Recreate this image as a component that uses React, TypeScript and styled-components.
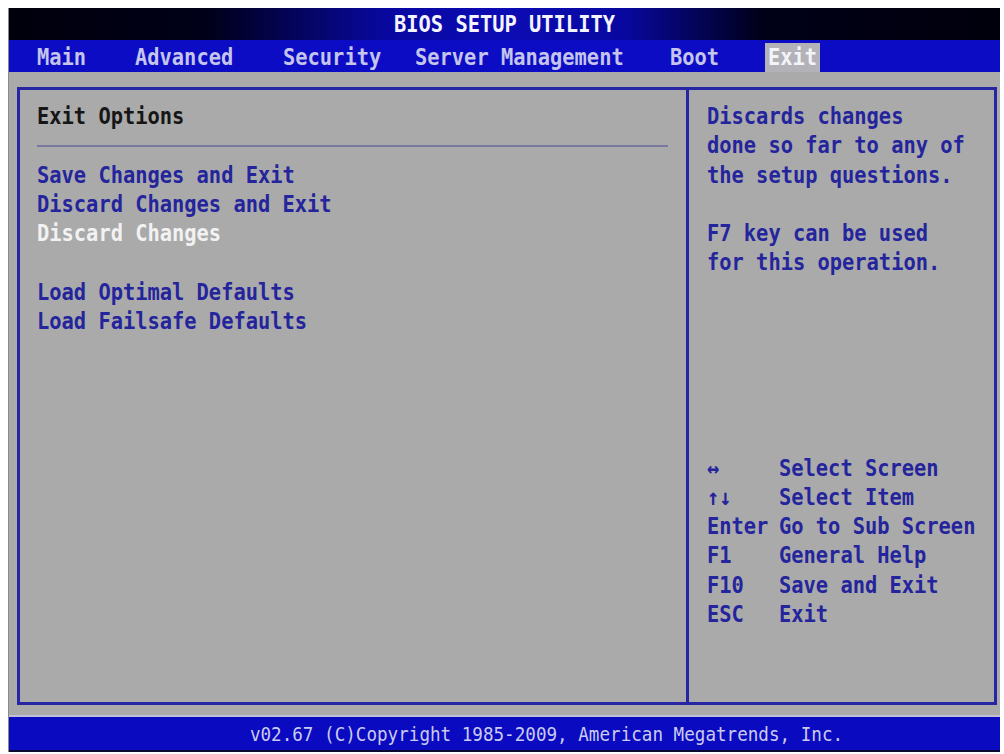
import React from "react";
import styled, { createGlobalStyle } from "styled-components";

const GlobalStyle = createGlobalStyle`
    html, body {
        margin: 0;
        padding: 0;
        background: #ffffff;
    }
`;

const LINE = 29.3;
const FONT = `"DejaVu Sans Mono", "Liberation Mono", monospace`;

const Screen = styled.div`
    margin: 8px 0 0 8px;
    width: 992px;
    height: 744px;
    display: flex;
    flex-direction: column;
    background: #aaaaaa;
    font-family: ${FONT};
    font-weight: bold;
    font-size: 20.4px;
    border-left: 1px solid #8a8a8a;
    box-sizing: border-box;
`;

const TitleBar = styled.div`
    height: 32px;
    flex-shrink: 0;
    display: flex;
    align-items: center;
    justify-content: center;
    color: #f4f4ff;
    background: linear-gradient(
        90deg,
        #00000c 0%,
        #000018 20%,
        #0808a0 38%,
        #0c0cb4 50%,
        #0808a0 62%,
        #000018 76%,
        #00000c 100%
    );
    span {
        display: inline-block;
        transform: scaleY(1.12);
    }
`;

const MenuBar = styled.div`
    height: 32px;
    flex-shrink: 0;
    display: flex;
    align-items: flex-end;
    background: #0c0cc4;
    padding-left: 28px;
`;

const MenuItem = styled.div<{ $w?: number; $active?: boolean }>`
    width: ${(p) => (p.$w ? `${p.$w}px` : "auto")};
    height: 29px;
    line-height: 29px;
    flex-shrink: 0;
    color: #c4c4ec;
    white-space: pre;
    span {
        display: inline-block;
        transform: scaleY(1.12);
    }
    ${(p) =>
        p.$active &&
        `
        background: #b2b2b8;
        color: #f4f4f8;
        padding: 0 3px;
        margin-left: -3px;
    `}
`;

const Body = styled.div`
    flex: 1;
    padding: 15px 3px 12px 8px;
    display: flex;
    flex-direction: column;
    box-shadow: inset 0 -2px 0 #c0c0d8;
`;

const Frame = styled.div`
    flex: 1;
    display: grid;
    grid-template-columns: 666px 1fr;
    border: 3px solid #2626a4;
`;

const Panel = styled.div<{ $divider?: boolean }>`
    display: flex;
    flex-direction: column;
    padding: 12px 0 0 ${(p) => (p.$divider ? 18 : 17)}px;
    ${(p) => p.$divider && `border-left: 3px solid #2626a4;`}
`;

const Line = styled.div<{ $tone?: "dark" | "blue" | "white" }>`
    height: ${LINE}px;
    line-height: ${LINE}px;
    white-space: pre;
    transform: scaleY(1.12);
    color: ${(p) =>
        p.$tone === "dark" ? "#161616" : p.$tone === "white" ? "#f2f2f2" : "#24249c"};
`;

const Separator = styled.div`
    height: ${LINE}px;
    display: flex;
    align-items: center;
    margin-right: 18px;
    &::after {
        content: "";
        flex: 1;
        height: 2px;
        background: #7878a0;
    }
`;

const HelpBlock = styled.div`
    margin-top: ${LINE * 6}px;
`;

const HelpRow = styled.div`
    display: flex;
    height: ${LINE}px;
    line-height: ${LINE}px;
    color: #24249c;
    white-space: pre;
    transform: scaleY(1.12);
`;

const HelpKey = styled.span`
    width: 72px;
    flex-shrink: 0;
`;

const Footer = styled.div`
    height: 35px;
    flex-shrink: 0;
    display: flex;
    align-items: center;
    justify-content: center;
    background: #0a0ac0;
    border-bottom: 2px solid #0a0a30;
    color: #cacaf0;
    font-weight: normal;
    font-size: 17.6px;
    box-sizing: border-box;
    padding-left: 84px;
    span {
        display: inline-block;
        transform: scaleY(1.15);
    }
`;

const menu = [
    { label: "Main", w: 98 },
    { label: "Advanced", w: 148 },
    { label: "Security", w: 132 },
    { label: "Server Management", w: 255 },
    { label: "Boot", w: 98 },
    { label: "Exit", active: true },
];

const help = [
    ["\u2194", "Select Screen"],
    ["\u2191\u2193", "Select Item"],
    ["Enter", "Go to Sub Screen"],
    ["F1", "General Help"],
    ["F10", "Save and Exit"],
    ["ESC", "Exit"],
];

export default function App() {
    return (
        <>
            <GlobalStyle />
            <Screen>
                <TitleBar>
                    <span>BIOS SETUP UTILITY</span>
                </TitleBar>
                <MenuBar>
                    {menu.map((m) => (
                        <MenuItem key={m.label} $w={m.w} $active={m.active}>
                            <span>{m.label}</span>
                        </MenuItem>
                    ))}
                </MenuBar>
                <Body>
                    <Frame>
                        <Panel>
                            <Line $tone="dark">Exit Options</Line>
                            <Separator />
                            <Line>Save Changes and Exit</Line>
                            <Line>Discard Changes and Exit</Line>
                            <Line $tone="white">Discard Changes</Line>
                            <Line />
                            <Line>Load Optimal Defaults</Line>
                            <Line>Load Failsafe Defaults</Line>
                        </Panel>
                        <Panel $divider>
                            <Line>Discards changes</Line>
                            <Line>done so far to any of</Line>
                            <Line>the setup questions.</Line>
                            <Line />
                            <Line>F7 key can be used</Line>
                            <Line>for this operation.</Line>
                            <HelpBlock>
                                {help.map(([k, d]) => (
                                    <HelpRow key={k}>
                                        <HelpKey>{k}</HelpKey>
                                        {d}
                                    </HelpRow>
                                ))}
                            </HelpBlock>
                        </Panel>
                    </Frame>
                </Body>
                <Footer>
                    <span>v02.67 (C)Copyright 1985-2009, American Megatrends, Inc.</span>
                </Footer>
            </Screen>
        </>
    );
}
